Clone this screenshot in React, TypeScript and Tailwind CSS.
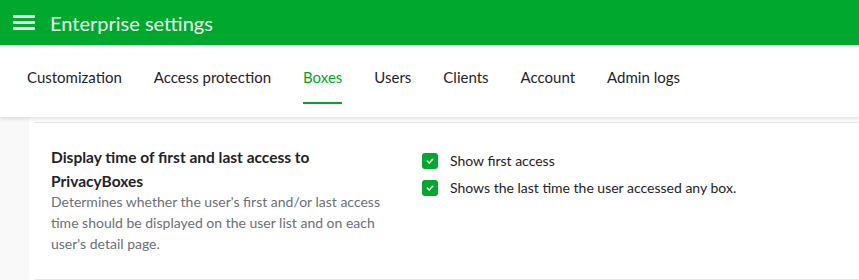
import React from "react";

const tabs = ["Customization", "Access protection", "Boxes", "Users", "Clients", "Account", "Admin logs"];

function Check() {
  return (
    <span className="flex h-4 w-4 shrink-0 items-center justify-center rounded-[3px] bg-[#00a82e]">
      <svg width="10" height="10" viewBox="0 0 10 10" fill="none">
        <path d="M2.3 5.2 L4.2 7 L7.7 3.3" stroke="white" strokeWidth="1.6" strokeLinecap="round" strokeLinejoin="round" />
      </svg>
    </span>
  );
}

export default function App() {
  return (
    <div className="h-[280px] w-[859px] overflow-hidden bg-white" style={{ fontFamily: "Lato, 'Open Sans', sans-serif" }}>
      <header className="flex h-[45px] items-center bg-[#00a82e] pl-[13px]">
        <div className="flex w-[22px] flex-col gap-[3px]">
          <span className="h-[3px] rounded-[1px] bg-[#e6f6ea]" />
          <span className="h-[3px] rounded-[1px] bg-[#e6f6ea]" />
          <span className="h-[3px] rounded-[1px] bg-[#e6f6ea]" />
        </div>
        <span className="ml-[15px] text-[20px] text-[#eefaf1]">Enterprise settings</span>
      </header>
      <nav className="relative z-10 flex h-[72px] items-center bg-white pb-[8px] pl-[11px] shadow-[0_2px_4px_rgba(0,0,0,0.12)]">
        {tabs.map((t) => (
          <div key={t} className="relative px-4 text-[15px]">
            <span className={t === "Boxes" ? "text-[#00a82e]" : "text-[#1f2328]"}>{t}</span>
            {t === "Boxes" && <span className="absolute left-4 right-4 top-[36px] h-[2px] bg-[#00a82e]" />}
          </div>
        ))}
      </nav>
      <div className="flex h-[163px]">
        <div className="w-[27px] bg-[#f9f9f9] shadow-[1px_0_3px_rgba(0,0,0,0.06)]" />
        <div className="flex-1 pl-[8px] pt-[5px]">
          <div className="flex border-y border-[#e6e6e6] pb-[25px] pl-4 pt-[22px]">
            <div className="w-[345px]">
              <div className="text-[15.5px] font-bold leading-[24px] text-[#1f2328]">
                Display time of first and last access to PrivacyBoxes
              </div>
              <div className="-mt-[2px] text-[14px] leading-[21px] text-[#6b7079]">
                Determines whether the user's first and/or last access time should be displayed on the user list and on each user's detail page.
              </div>
            </div>
            <div className="ml-[26px] flex flex-col gap-[7px] pt-[6px]">
              <label className="flex items-center gap-3 text-[14px] leading-[20px] text-[#1f2328]">
                <Check />
                <span>Show first access</span>
              </label>
              <label className="flex items-center gap-3 text-[14px] leading-[20px] text-[#1f2328]">
                <Check />
                <span>Shows the last time the user accessed any box.</span>
              </label>
            </div>
          </div>
        </div>
      </div>
    </div>
  );
}
